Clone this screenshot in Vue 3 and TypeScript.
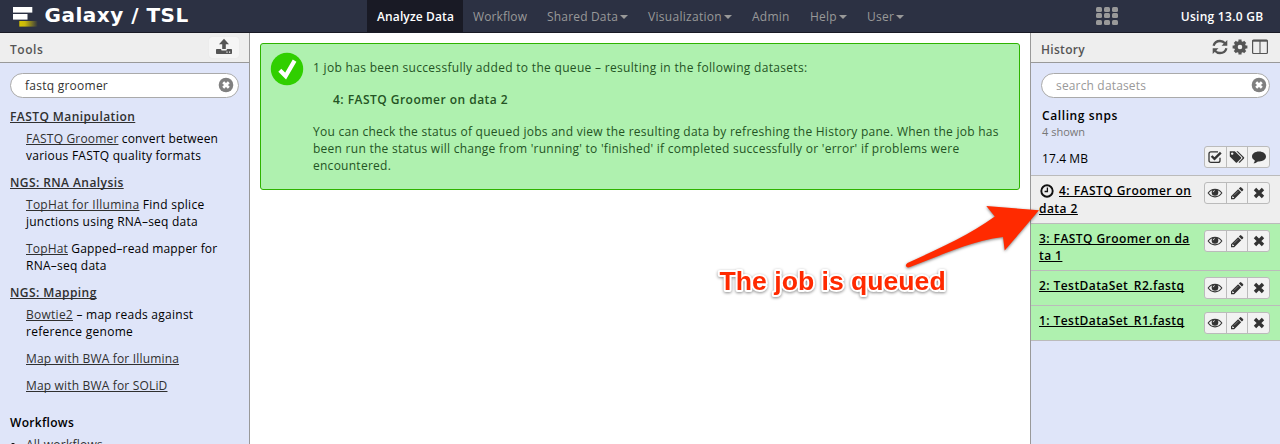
<script setup lang="ts">
interface NavItem { label: string; kind: string; menu?: boolean; active?: boolean }
interface Tool { link?: string; text?: string; rest?: string; cls?: string; cls2?: string }
interface Section { title: string; tools: Tool[] }
interface Dataset { lines: string[]; state: 'queued' | 'ok' }

const nav: NavItem[] = [
  { label: 'Analyze Data', kind: 'analyze', active: true },
  { label: 'Workflow', kind: 'workflow' },
  { label: 'Shared Data', kind: 'shared', menu: true },
  { label: 'Visualization', kind: 'visual', menu: true },
  { label: 'Admin', kind: 'admin' },
  { label: 'Help', kind: 'help', menu: true },
  { label: 'User', kind: 'user', menu: true },
]

const sections: Section[] = [
  {
    title: 'FASTQ Manipulation',
    tools: [{ link: 'FASTQ Groomer', text: ' convert between', rest: 'various FASTQ quality formats', cls: 'ls-17', cls2: 'ls-23' }],
  },
  {
    title: 'NGS: RNA Analysis',
    tools: [
      { link: 'TopHat for Illumina', text: ' Find splice', rest: 'junctions using RNA–seq data', cls: 'ls-27', cls2: 'ls-23' },
      { link: 'TopHat', text: ' Gapped–read mapper for', rest: 'RNA–seq data', cls: 'ls-17', cls2: 'ls-23' },
    ],
  },
  {
    title: 'NGS: Mapping',
    tools: [
      { link: 'Bowtie2', text: ' – map reads against', rest: 'reference genome', cls: 'ls-26', cls2: 'ls-27' },
      { link: 'Map with BWA for Illumina', cls: 'ls-17' },
      { link: 'Map with BWA for SOLiD', cls: 'ls-17' },
    ],
  },
]

const datasets: Dataset[] = [
  { lines: ['4: FASTQ Groomer on', 'data 2'], state: 'queued' },
  { lines: ['3: FASTQ Groomer on da', 'ta 1'], state: 'ok' },
  { lines: ['2: TestDataSet_R2.fastq'], state: 'ok' },
  { lines: ['1: TestDataSet_R1.fastq'], state: 'ok' },
]
</script>

<template>
  <div class="app">
    <header class="masthead">
      <div class="brand">
        <svg class="logo" width="26" height="22" viewBox="0 0 26 22">
          <defs>
            <linearGradient id="gold" x1="0" x2="1" y1="0" y2="0">
              <stop offset="0" stop-color="#d6c300" />
              <stop offset=".3" stop-color="#c9b80c" />
              <stop offset="1" stop-color="#d6c300" stop-opacity="0" />
            </linearGradient>
          </defs>
          <rect x="0" y="1" width="19.3" height="5.6" fill="#fff" />
          <rect x="0" y="8" width="14.5" height="5.6" fill="#fff" />
          <rect x="6.3" y="15" width="18.5" height="5.6" fill="url(#gold)" />
        </svg>
        <span class="brand-name">Galaxy / TSL</span>
      </div>
      <nav class="nav">
        <a v-for="n in nav" :key="n.label" :class="['nav-item', n.kind, { active: n.active }]">
          {{ n.label }}<i v-if="n.menu" class="caret"></i>
        </a>
      </nav>
      <div class="grid-icon"><i v-for="k in 9" :key="k"></i></div>
      <span class="usage">Using 13.0 GB</span>
    </header>

    <div class="columns">
      <aside class="panel left">
        <div class="panel-head">
          <span class="head-tools">Tools</span>
          <span class="upload">
            <svg width="18" height="18" viewBox="0 0 18 18" fill="#555">
              <path d="M9 0.8 L14 6.2 H10.8 V11 H7.2 V6.2 H4 Z" />
              <path fill-rule="evenodd" d="M1.8 11 H6 L6.6 12.6 H11.4 L12 11 H16.2 Q17 11 17 11.8 V15.2 Q17 16 16.2 16 H1.8 Q1 16 1 15.2 V11.8 Q1 11 1.8 11 Z M11.4 13.6 V14.7 H12.6 V13.6 Z M14 13.6 V14.7 H15.2 V13.6 Z" />
            </svg>
          </span>
        </div>
        <div class="search">
          <span class="query">fastq groomer</span>
          <svg class="clear" width="16" height="16" viewBox="0 0 16 16">
            <circle cx="8" cy="8" r="7.3" fill="#808080" />
            <path d="M5.2 5.2 L10.8 10.8 M10.8 5.2 L5.2 10.8" stroke="#fff" stroke-width="2.7" />
          </svg>
        </div>
        <div class="tool-menu">
          <section v-for="s in sections" :key="s.title">
            <div class="section-title"><a>{{ s.title }}</a></div>
            <div v-for="(t, i) in s.tools" :key="i" class="tool">
              <div :class="t.cls"><a>{{ t.link }}</a>{{ t.text }}</div>
              <div v-if="t.rest" :class="t.cls2">{{ t.rest }}</div>
            </div>
          </section>
          <div class="workflows">Workflows</div>
          <div class="all"><i class="bullet"></i><a>All workflows</a></div>
        </div>
      </aside>

      <main class="center">
        <div class="message">
          <svg class="done" width="34" height="34" viewBox="0 0 34 34">
            <circle cx="17" cy="17" r="16.2" fill="#30cf00" />
            <path d="M9.8 18.3 L15.6 24 L24.6 8.6" fill="none" stroke="#fff" stroke-width="4.2" />
          </svg>
          <div class="message-text">
            <p class="ls-31">1 job has been successfully added to the queue – resulting in the following datasets:</p>
            <p class="job">4: FASTQ Groomer on data 2</p>
            <p class="ls-26">
              You can check the status of queued jobs and view the resulting data by refreshing the History pane. When the job has<br />
              been run the status will change from 'running' to 'finished' if completed successfully or 'error' if problems were<br />
              encountered.
            </p>
          </div>
        </div>
      </main>

      <aside class="panel right">
        <div class="panel-head">
          <span class="head-history">History</span>
          <span class="head-icons">
            <svg width="16" height="16" viewBox="0 0 16 16" fill="none" stroke="#555" stroke-width="2.3">
              <path d="M1.6 6.8 C2.4 3.6 5 2 8 2 C10.2 2 11.8 2.9 13 4.3" />
              <path d="M14.4 9.2 C13.6 12.4 11 14 8 14 C5.8 14 4.2 13.1 3 11.7" />
              <path d="M15.3 1 V6.8 H9.5 Z M0.7 15 V9.2 H6.5 Z" fill="#555" stroke="none" />
            </svg>
            <svg width="16" height="16" viewBox="0 0 16 16" fill="none" stroke="#555">
              <circle cx="8" cy="8" r="4.1" stroke-width="3.6" />
              <path d="M8 .6 V3 M8 13 V15.4 M.6 8 H3 M13 8 H15.4 M2.8 2.8 L4.4 4.4 M11.6 11.6 L13.2 13.2 M2.8 13.2 L4.4 11.6 M11.6 4.4 L13.2 2.8" stroke-width="3.1" />
            </svg>
            <svg width="16" height="16" viewBox="0 0 16 16" fill="none" stroke="#555">
              <rect x=".6" y="1.1" width="14.8" height="13.4" rx="1" stroke-width="1.2" />
              <path d="M0.5 1.8 H15.5" stroke-width="1.8" />
              <path d="M8 2 V14.5" stroke-width="1.1" />
            </svg>
          </span>
        </div>
        <div class="search">
          <span class="placeholder">search datasets</span>
          <svg class="clear" width="16" height="16" viewBox="0 0 16 16">
            <circle cx="8" cy="8" r="7.3" fill="#808080" />
            <path d="M5.2 5.2 L10.8 10.8 M10.8 5.2 L5.2 10.8" stroke="#fff" stroke-width="2.7" />
          </svg>
        </div>
        <div class="summary">
          <div class="name">Calling snps</div>
          <div class="shown">4 shown</div>
          <div class="size-row">
            <span class="size">17.4 MB</span>
            <span class="buttons">
              <b>
                <svg width="16" height="16" viewBox="0 0 16 16" fill="none" stroke="#333">
                  <path d="M13 8.8 V11.4 Q13 13.4 11 13.4 H4 Q2 13.4 2 11.4 V4.8 Q2 2.8 4 2.8 H11" stroke-width="1.3" />
                  <path d="M4.6 7 L7.5 9.9 L13.8 3.6" stroke-width="2.4" />
                </svg>
              </b>
              <b>
                <svg width="16" height="16" viewBox="0 0 16 16" fill="#333">
                  <path fill-rule="evenodd" d="M.8 2.2 H5.8 L12 8.3 Q12.5 8.9 12 9.5 L8 13.5 Q7.4 14 6.8 13.5 L.8 7.4 Z M3.2 3.4 A1.2 1.2 0 1 0 3.21 3.4 Z" />
                  <path d="M7.4 2.2 H8.8 L15 8.3 Q15.5 8.9 15 9.5 L11 13.5 Q10.4 14 9.8 13.5 L9.6 13.2 L13.3 9.4 Q13.7 8.9 13.3 8.3 Z" />
                </svg>
              </b>
              <b>
                <svg width="16" height="16" viewBox="0 0 16 16" fill="#333">
                  <path d="M8 2.6 C12.2 2.6 15 4.8 15 7.6 C15 10.4 12.2 12.5 8 12.5 L6.9 12.4 C5.4 13.7 3.8 14.2 2.4 14.3 C3.3 13.4 3.7 12.5 3.8 11.4 C2 10.5 1 9.2 1 7.6 C1 4.8 3.8 2.6 8 2.6 Z" />
                </svg>
              </b>
            </span>
          </div>
        </div>
        <div v-for="d in datasets" :key="d.lines[0]" :class="['dataset', d.state]">
          <div class="title">
            <div v-for="(l, i) in d.lines" :key="l" class="title-line">
              <svg v-if="d.state === 'queued' && i === 0" class="clock" width="14" height="14" viewBox="0 0 14 14" fill="none" stroke="#111">
                <circle cx="7" cy="7" r="5.7" stroke-width="1.9" />
                <path d="M7.4 3.6 V7.5 H4.6" stroke-width="1.3" />
              </svg>
              <a>{{ l }}</a>
            </div>
          </div>
          <span class="buttons">
            <b>
              <svg width="16" height="16" viewBox="0 0 16 16" fill="none" stroke="#333">
                <path d="M1.2 8 C4.6 2.9 11.4 2.9 14.8 8 C11.4 13.1 4.6 13.1 1.2 8 Z" stroke-width="1.1" />
                <circle cx="8" cy="7.4" r="3.3" fill="#333" stroke="none" />
                <path d="M6.2 7.2 Q6.3 5.7 7.8 5.6" stroke="#f2f2f2" stroke-width=".8" />
              </svg>
            </b>
            <b>
              <svg width="16" height="16" viewBox="0 0 16 16" fill="#333">
                <path d="M10.9 2.4 Q11.6 1.7 12.3 2.4 L14 4.1 Q14.7 4.8 14 5.5 L12.9 6.6 L9.8 3.5 Z" />
                <path fill-rule="evenodd" d="M9.1 4.2 L12.2 7.3 L5.2 14.3 H2 V11.2 Z M3.2 11.7 V13.1 H4.7 L5.2 12.6 L3.7 11.2 Z" />
                <path d="M5 10.4 L9.3 6.1" stroke="#aaa" stroke-width=".6" />
              </svg>
            </b>
            <b>
              <svg width="16" height="16" viewBox="0 0 16 16"><path d="M4 4 L12 12 M12 4 L4 12" stroke="#333" stroke-width="3.4" /></svg>
            </b>
          </span>
        </div>
      </aside>
    </div>

    <svg class="annotation" width="350" height="120" viewBox="0 0 350 120">
      <g class="arrow">
        <path d="M339 20.3 L286.3 16 L294.8 26.6 C270 45 240 58 207.5 73 Q205 75 206.3 76.5 Q207.5 78 210 77 C240 66 270 51 303 47 L304.7 60.5 Z" fill="#ff2a00" />
      </g>
      <text x="19.6" y="99.5" class="note">The job is queued</text>
    </svg>
  </div>
</template>

<style>
html,
body {
  margin: 0;
  background: #fff;
  overflow: hidden;
}
</style>

<style scoped>
.app {
  position: relative;
  width: 1280px;
  height: 444px;
  overflow: hidden;
  display: flex;
  flex-direction: column;
  font: 12px/17px "Open Sans", "Noto Sans", sans-serif;
  letter-spacing: 0.25px;
  color: #000;
}
.app * { box-sizing: border-box; }
a {
  text-decoration: underline;
  text-decoration-thickness: 1px;
  text-underline-offset: 1px;
  text-decoration-skip-ink: none;
}
.ls-17 { letter-spacing: 0.17px; }
.ls-23 { letter-spacing: 0.24px; }
.ls-26 { letter-spacing: 0.26px; }
.ls-27 { letter-spacing: 0.27px; }
.ls-31 { letter-spacing: 0.31px; }

.masthead {
  flex: none;
  display: flex;
  height: 33px;
  background: #2c3143;
  border-bottom: 1px solid #191a25;
}
.brand {
  width: 367px;
  padding-left: 12.5px;
  display: flex;
}
.logo { flex: none; margin-top: 6px; }
.brand-name {
  margin: 1px 0 0 6px;
  font: bold 20px/28px "DejaVu Sans", sans-serif;
  letter-spacing: 0.5px;
  color: #fff;
  white-space: nowrap;
}
.nav { display: flex; width: 729px; }
.nav-item {
  display: flex;
  padding: 8px 0 0 10px;
  color: #999;
  text-decoration: none;
  white-space: nowrap;
}
.nav-item.active {
  background: #191a25;
  color: #fff;
  font-weight: 600;
}
.analyze { width: 96px; letter-spacing: 0.12px; }
.workflow { width: 74px; letter-spacing: 0.12px; }
.shared { width: 101px; letter-spacing: 0.18px; }
.visual { width: 104px; letter-spacing: 0.29px; }
.admin { width: 58px; }
.help { width: 57px; }
.caret {
  margin: 7px 0 0 2px;
  width: 0;
  height: 0;
  border: 4px solid transparent;
  border-top-color: #999;
  border-bottom: 0;
}
.grid-icon {
  display: grid;
  grid-template-columns: repeat(3, 6.4px);
  grid-auto-rows: 5px;
  gap: 1.5px;
  width: 22.2px;
  margin-top: 6.5px;
  align-content: start;
}
.grid-icon i { background: #999; border-radius: 1.5px; }
.usage {
  margin: 8px 0 0 62.5px;
  color: #fff;
  font-weight: 600;
  letter-spacing: 0.28px;
  white-space: nowrap;
}

.columns { flex: 1; display: flex; min-height: 0; }
.panel { flex: none; background: #dfe5f9; }
.left { width: 250px; border-right: 1px solid #999; overflow: hidden; }
.right { width: 250px; border-left: 1px solid #999; }
.panel-head {
  display: flex;
  justify-content: space-between;
  height: 30px;
  padding: 8px 10px 0;
  background: #eee;
  border-bottom: 1px solid #999;
  font-weight: 600;
  color: #555;
}
.head-tools { letter-spacing: 0.55px; }
.head-history { letter-spacing: 0.3px; }
.upload {
  display: flex;
  justify-content: center;
  width: 30px;
  height: 21px;
  margin-top: -4px;
  padding-top: 1px;
  border-radius: 3px;
  background: #f5f5f5;
  box-shadow: 0 0 1px #ddd;
}
.head-icons { display: flex; gap: 4px; margin: -2px 2px 0 0; }
.search {
  display: flex;
  justify-content: space-between;
  width: 229px;
  height: 25px;
  margin: 10px 0 0 10px;
  padding: 3px 4px 0 14px;
  border: 1px solid #aaa;
  border-radius: 13px;
  background: #fff;
  color: #333;
}
.clear { margin-top: -0.5px; }
.right .search { padding-right: 2.5px; }
.query { letter-spacing: 0.25px; }
.placeholder { color: #999; letter-spacing: 0.16px; }

.tool-menu { padding: 10px 0 0 10px; white-space: nowrap; }
.tool-menu a { color: #303030; }
.tool-menu section { margin-bottom: 10px; }
.section-title { font-weight: 600; margin-bottom: 5px; letter-spacing: 0.42px; }
.tool { padding-left: 16px; }
.tool + .tool { margin-top: 10px; }
.workflows { margin: 20px 0 5px; font-weight: 600; letter-spacing: 0.3px; }
.all { display: flex; align-items: flex-start; }
.bullet { width: 4px; height: 4px; margin: 7px 11px 0 1px; border-radius: 2px; background: #000; }

.center { flex: 1; padding: 10px 10px 0; }
.message {
  display: flex;
  height: 147px;
  border: 1px solid #2eb300;
  border-radius: 3px;
  background: #aff1af;
  color: #245424;
  white-space: nowrap;
}
.done { flex: none; margin: 8px 0 0 9px; }
.message-text { padding: 15px 0 0 9px; }
.message-text p { margin: 0 0 15px; }
.job { padding-left: 20px; font-weight: 600; letter-spacing: 0.47px; }

.summary {
  height: 78px;
  padding: 9px 10px 0 11px;
  border-bottom: 1px solid #bbb;
}
.name { font-weight: 600; letter-spacing: 0.6px; }
.shown { font-size: 11px; line-height: 16px; letter-spacing: 0; color: #777; }
.size-row { display: flex; justify-content: space-between; margin-top: 6px; }
.size { padding-top: 4px; letter-spacing: 0.1px; }
.buttons {
  flex: none;
  display: flex;
  width: 66px;
  height: 22px;
  border: 1px solid #bbb;
  border-radius: 3px;
  background: #f2f2f2;
}
.buttons b { flex: 1; display: flex; align-items: center; justify-content: center; }
.buttons b + b { border-left: 1px solid #bbb; }
.dataset {
  display: flex;
  justify-content: space-between;
  align-items: flex-start;
  padding: 6px 10px 6px 8px;
  border-bottom: 1px solid #bbb;
  font-weight: 600;
}
.dataset.ok { background: #aff1af; letter-spacing: 0.43px; }
.dataset.queued { background: #eee; letter-spacing: 0.46px; }
.queued .title-line { display: flex; height: 18px; }
.queued .title { height: 35px; }
.clock { margin: 2px 5px 0 1px; }
.title { white-space: nowrap; }

.annotation { position: absolute; left: 700px; top: 190px; }
.arrow { filter: drop-shadow(0 1.5px 1.5px rgba(0, 0, 0, 0.5)); }
.note {
  font: bold 26.6px "Liberation Sans", sans-serif;
  letter-spacing: 0;
  fill: #ff2a00;
  stroke: #fff;
  stroke-width: 4px;
  stroke-linejoin: round;
  paint-order: stroke;
  filter: drop-shadow(0 1.5px 1.5px rgba(0, 0, 0, 0.45));
}
</style>
